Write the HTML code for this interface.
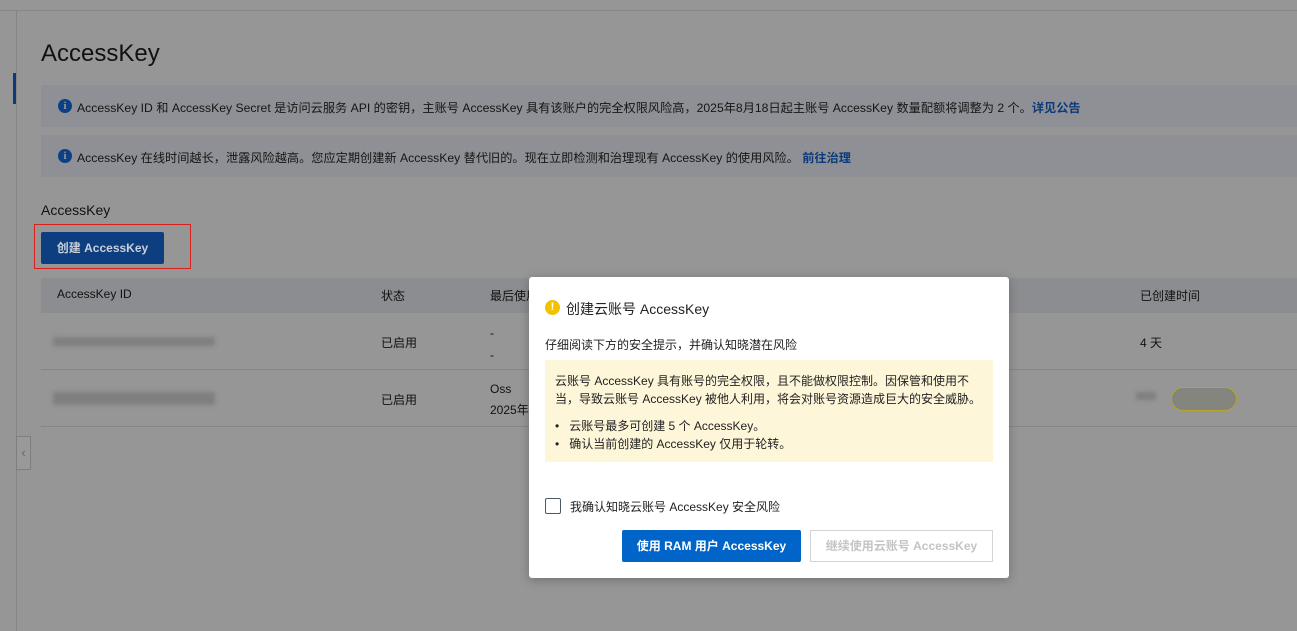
<!DOCTYPE html>
<html><head><meta charset="utf-8"><style>
*{margin:0;padding:0;box-sizing:border-box}
body{width:1297px;height:631px;overflow:hidden;background:#969696;font-family:"Liberation Sans","Noto Sans CJK SC",sans-serif;color:#111;position:relative;font-size:12px}
.a{position:absolute}
.info{left:41px;right:0;background:#8e9095;height:42px}
.info span{position:absolute;left:36px;top:13px;color:#151515;font-size:12.2px}
.ic{position:absolute;left:17px;top:14px;width:14px;height:14px;border-radius:50%;background:#0c3f86;color:#999;font:bold 11px/14px "Liberation Serif",serif;text-align:center}
.lk{color:#0d3a7a;font-weight:bold}
.th{left:41px;right:0;top:278px;height:35px;background:#8b8d91}
.row{left:41px;right:0;height:57px;border-bottom:1px solid #868686}
.blur{background:#7f7f7f;filter:blur(2px)}
.modal{left:529px;top:277px;width:480px;height:301px;background:#fff;border-radius:3px;box-shadow:0 2px 10px rgba(0,0,0,.25)}
.modal .a{color:#222}
</style></head><body>
<div class="a" style="left:0;top:10px;width:1297px;border-top:1px solid #878787"></div>
<div class="a" style="left:16px;top:10px;height:621px;border-left:1px solid #858585"></div>
<div class="a" style="left:13px;top:73px;width:3px;height:31px;background:#0b3a7c"></div>
<div class="a" style="left:41px;top:40px;font-size:24px;color:#111">AccessKey</div>
<div class="a info" style="top:85px"><div class="ic">i</div><span>AccessKey ID 和 AccessKey Secret 是访问云服务 API 的密钥，主账号 AccessKey 具有该账户的完全权限风险高，2025年8月18日起主账号 AccessKey 数量配额将调整为 2 个。<b class="lk">详见公告</b></span></div>
<div class="a info" style="top:135px"><div class="ic">i</div><span>AccessKey 在线时间越长，泄露风险越高。您应定期创建新 AccessKey 替代旧的。现在立即检测和治理现有 AccessKey 的使用风险。 <b class="lk">前往治理</b></span></div>
<div class="a" style="left:41px;top:202px;font-size:14px">AccessKey</div>
<div class="a" style="left:41px;top:232px;width:123px;height:32px;background:#0d3f80;border-radius:2px;color:#c8cfdb;text-align:center;line-height:32px;font-weight:600">创建 AccessKey</div>
<div class="a" style="left:34px;top:224px;width:157px;height:45px;border:1.5px solid #d8201c"></div>
<div class="a th"><span class="a" style="left:16px;top:9px">AccessKey ID</span><span class="a" style="left:340px;top:9px">状态</span><span class="a" style="left:449px;top:9px">最后使用</span><span class="a" style="left:1099px;top:9px">已创建时间</span></div>
<div class="a row" style="top:313px"><div class="a blur" style="left:12px;top:24px;width:162px;height:9px"></div><span class="a" style="left:340px;top:21px">已启用</span><span class="a" style="left:449px;top:9px;line-height:22px">-<br>-</span><span class="a" style="left:1099px;top:21px">4 天</span></div>
<div class="a row" style="top:370px"><div class="a blur" style="left:12px;top:22px;width:162px;height:13px"></div><span class="a" style="left:340px;top:21px">已启用</span><span class="a" style="left:449px;top:9px;line-height:21px">Oss<br>2025年</span><div class="a blur" style="left:1095px;top:22px;width:20px;height:8px"></div><div class="a" style="left:1130px;top:17px;width:66px;height:24px;border:1.5px solid #b8a42a;border-radius:12px;background:#858580"></div></div>
<div class="a" style="left:16px;top:436px;width:15px;height:34px;border:1px solid #7f7f7f;background:#999;color:#666;font-size:13px;line-height:32px;text-align:center">‹</div>
<div class="a modal">
<div class="a" style="left:16px;top:23px;width:15px;height:15px;border-radius:50%;background:#f2c100;color:#fff;font:bold 11px/15px sans-serif;text-align:center">!</div>
<div class="a" style="left:37px;top:22px;font-size:14px">创建云账号 AccessKey</div>
<div class="a" style="left:16px;top:59px">仔细阅读下方的安全提示，并确认知晓潜在风险</div>
<div class="a" style="left:16px;top:83px;width:448px;height:102px;background:#fdf6d9"></div>
<div class="a" style="left:26px;top:95px;width:430px;line-height:18px">云账号 AccessKey 具有账号的完全权限，且不能做权限控制。因保管和使用不当，导致云账号 AccessKey 被他人利用，将会对账号资源造成巨大的安全威胁。</div>
<div class="a" style="left:26px;top:140px;line-height:18px">•&nbsp;&nbsp;&nbsp;云账号最多可创建 5 个 AccessKey。<br>•&nbsp;&nbsp;&nbsp;确认当前创建的 AccessKey 仅用于轮转。</div>
<div class="a" style="left:16px;top:221px;width:16px;height:16px;border:1px solid #4a5a6a;border-radius:2px"></div>
<div class="a" style="left:41px;top:221px">我确认知晓云账号 AccessKey 安全风险</div>
<div class="a" style="left:93px;top:253px;width:179px;height:32px;background:#0064c8;border-radius:2px;color:#fff!important;font-weight:bold;text-align:center;line-height:32px">使用 RAM 用户 AccessKey</div>
<div class="a" style="left:281px;top:253px;width:183px;height:32px;border:1px solid #d4d4d4;color:#c4c4c4!important;font-weight:bold;text-align:center;line-height:30px">继续使用云账号 AccessKey</div>
</div>
</body></html>
